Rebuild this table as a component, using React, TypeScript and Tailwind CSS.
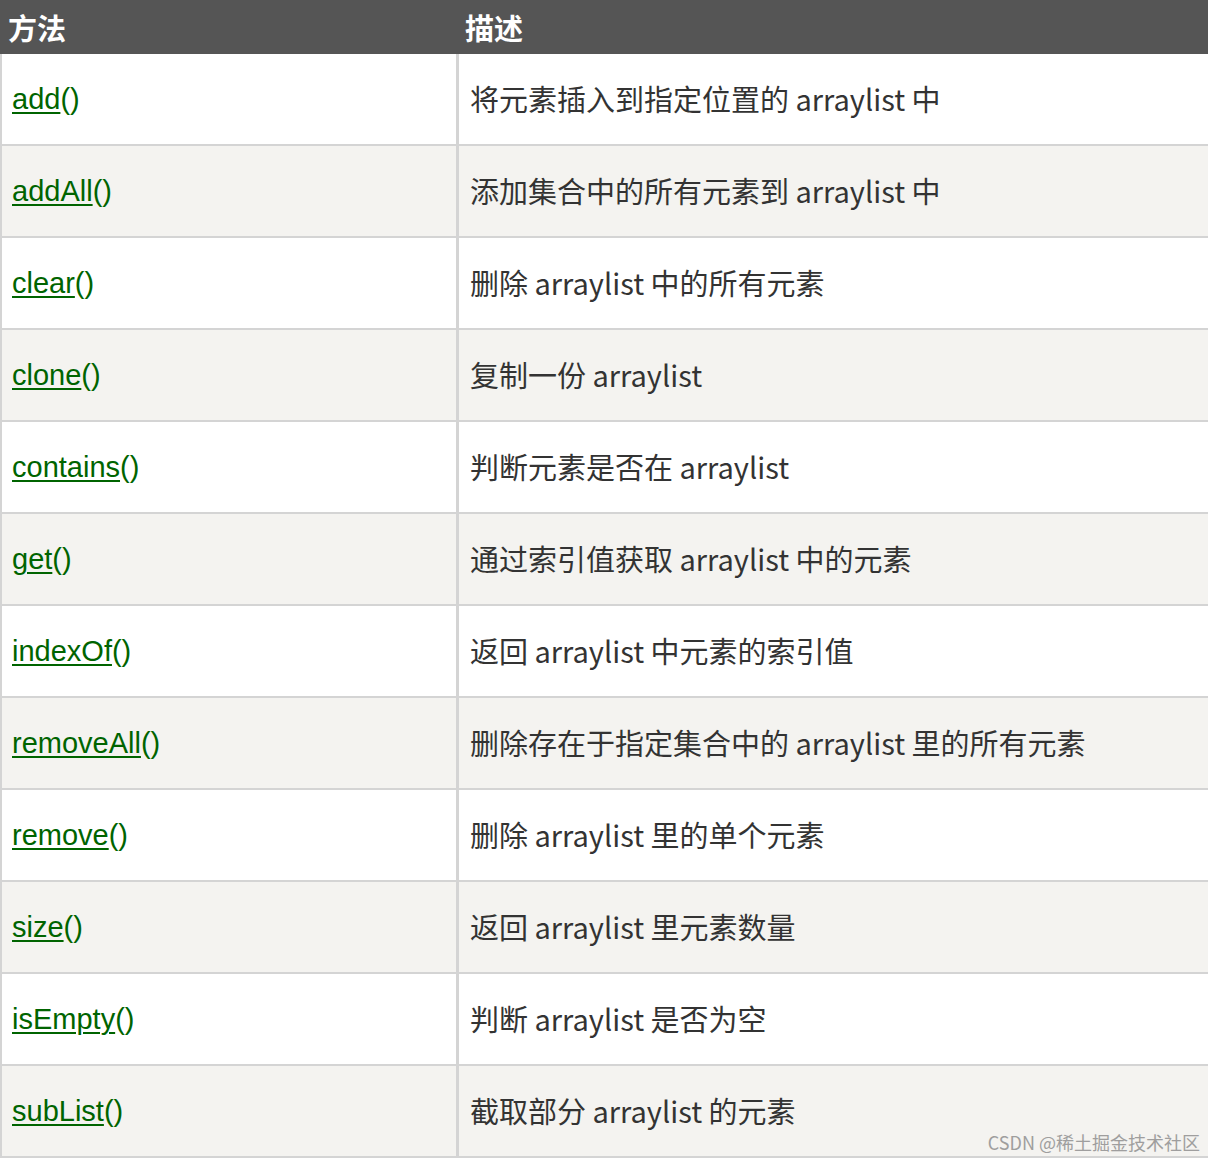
const rows: [string, string][] = [
  ["add", "将元素插入到指定位置的 arraylist 中"],
  ["addAll", "添加集合中的所有元素到 arraylist 中"],
  ["clear", "删除 arraylist 中的所有元素"],
  ["clone", "复制一份 arraylist"],
  ["contains", "判断元素是否在 arraylist"],
  ["get", "通过索引值获取 arraylist 中的元素"],
  ["indexOf", "返回 arraylist 中元素的索引值"],
  ["removeAll", "删除存在于指定集合中的 arraylist 里的所有元素"],
  ["remove", "删除 arraylist 里的单个元素"],
  ["size", "返回 arraylist 里元素数量"],
  ["isEmpty", "判断 arraylist 是否为空"],
  ["subList", "截取部分 arraylist 的元素"],
]

export default function App() {
  return (
    <div className="relative w-[1208px] h-[1163px] overflow-hidden bg-white">
      {/* Header */}
      <div className="grid grid-cols-[459px_1fr] h-[54px] bg-[#555555] text-white font-bold text-[29px] items-center [font-family:'Noto_Sans_CJK_SC',sans-serif]">
        <div className="pl-[8px] leading-none">方法</div>
        <div className="pl-[6px] leading-none">描述</div>
      </div>

      {/* Rows */}
      {rows.map(([name, desc], i) => (
        <div
          key={name}
          className={`grid grid-cols-[459px_1fr] h-[92px] border-b-2 border-[#d4d4d4] ${
            i % 2 === 1 ? "bg-[#f4f3f0]" : "bg-white"
          }`}
        >
          <div className="flex items-center border-l-2 border-r-[3px] border-[#d4d4d4] pl-[10px] pt-[2px] text-[29px] text-[#006400] [font-family:'Liberation_Sans',Arial,sans-serif]">
            <span>
              <a className="underline underline-offset-[3px] decoration-2">{name}</a>()
            </span>
          </div>
          <div className="flex items-center pl-[11px] text-[29px] text-[#333333] [font-family:'Noto_Sans_CJK_SC',sans-serif]">
            {desc}
          </div>
        </div>
      ))}

      {/* Watermark */}
      <div className="absolute right-[8px] bottom-[7px] text-[18px] text-[#8a8a8a] opacity-80 [font-family:'Noto_Sans_CJK_SC',sans-serif]">
        CSDN @稀土掘金技术社区
      </div>
    </div>
  )
}
